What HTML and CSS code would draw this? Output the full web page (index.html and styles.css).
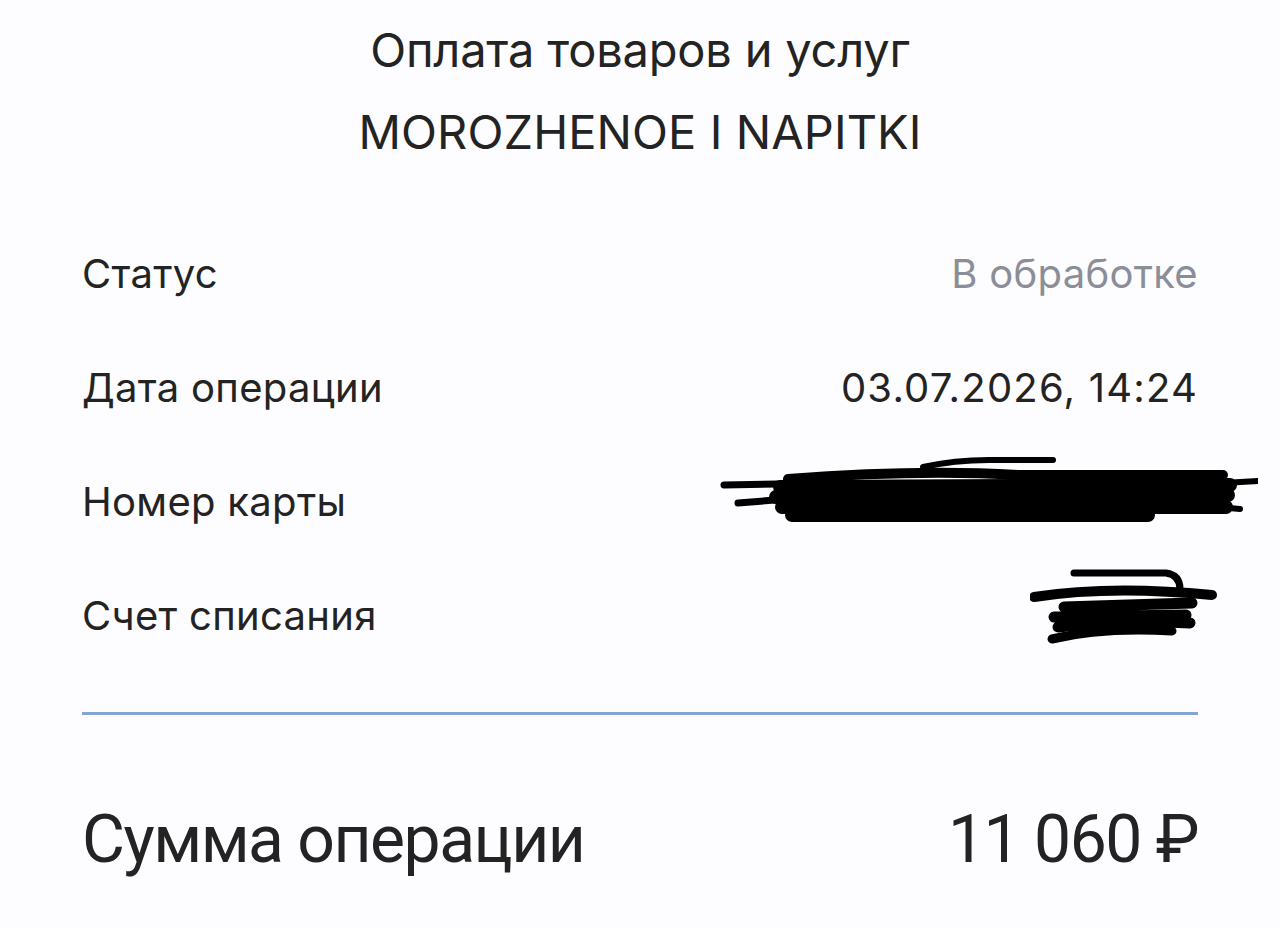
FILE: index.html
```html
<!DOCTYPE html>
<html lang="ru">
<head>
    <meta charset="UTF-8">
    <title>Детали операции</title>
    <link rel="stylesheet" href="styles.css">
</head>
<body>
    <div class="receipt">
        <div class="head">
            <div class="head-type">Оплата товаров и услуг</div>
            <div class="head-merchant">MOROZHENOE I NAPITKI</div>
        </div>

        <div class="rows">
            <div class="row">
                <span class="label">Статус</span>
                <span class="value muted">В обработке</span>
            </div>
            <div class="row">
                <span class="label">Дата операции</span>
                <span class="value date">03.07.2026, 14:24</span>
            </div>
            <div class="row">
                <span class="label">Номер карты</span>
                <span class="value">
                    <!-- закрашено маркером -->
                    <svg class="scribble card-scribble" width="540" height="90" viewBox="0 0 540 90">
                        <g fill="none" stroke="#000" stroke-linecap="round" stroke-linejoin="round">
                            <path d="M205 12 Q240 4 280 5 L335 5" stroke-width="6"/>
                            <path d="M6 30 L120 28 M20 48 L70 44" stroke-width="7"/>
                            <path d="M70 24 Q200 14 300 20 L505 20" stroke-width="10"/>
                            <path d="M62 32 L512 30 M58 42 L510 40 M64 52 L508 52 M74 60 L430 60" stroke-width="14"/>
                            <path d="M505 28 L540 26 M500 52 L522 54" stroke-width="6"/>
                        </g>
                    </svg>
                </span>
            </div>
            <div class="row">
                <span class="label">Счет списания</span>
                <span class="value">
                    <svg class="scribble acc-scribble" width="200" height="90" viewBox="0 0 200 90">
                        <g fill="none" stroke="#000" stroke-linecap="round" stroke-linejoin="round">
                            <path d="M44 6 L136 6 Q150 8 150 22" stroke-width="7"/>
                            <path d="M4 30 Q80 18 182 28" stroke-width="10"/>
                            <path d="M34 40 L162 36 M24 50 L156 48 M28 60 Q90 52 160 56" stroke-width="11"/>
                            <path d="M22 72 Q72 60 142 64" stroke-width="9"/>
                        </g>
                    </svg>
                </span>
            </div>
        </div>

        <div class="divider"></div>

        <div class="total">
            <span class="total-label">Сумма операции</span>
            <span class="total-value">11 060 ₽</span>
        </div>
    </div>
</body>
</html>
```

FILE: styles.css
```css
body {
    margin: 0;
    background-color: #fdfcfe;
    font-family: Inter, "Liberation Sans", Arial, sans-serif;
    color: #232323;
}
.receipt {
    padding: 24px 82px 0 82px;
}
.head {
    text-align: center;
}
.head-type {
    font-size: 47px;
    line-height: 52px;
    letter-spacing: -0.2px;
}
.head-merchant {
    font-size: 47px;
    line-height: 52px;
    margin-top: 30px;
    letter-spacing: 0.1px;
}
.rows {
    margin-top: 58px;
}
.row {
    display: flex;
    justify-content: space-between;
    align-items: center;
    height: 114px;
}
.label,
.value {
    font-size: 40px;
    letter-spacing: 0.3px;
}
.value {
    display: flex;
    align-items: center;
}
.date {
    letter-spacing: 1.2px;
}
.muted {
    color: #8b8e97;
}
.scribble {
    display: block;
}
.card-scribble {
    margin-right: -60px;
    margin-top: -2px;
}
.acc-scribble {
    margin-right: -32px;
    margin-top: -6px;
}
.divider {
    height: 3px;
    background-color: #86a4d2;
    margin-top: 40px;
}
.total {
    display: flex;
    justify-content: space-between;
    align-items: center;
    margin-top: 86px;
    font-family: Roboto, "Liberation Sans", Arial, sans-serif;
}
.total-label,
.total-value {
    font-size: 66px;
    letter-spacing: -1.5px;
}
```
